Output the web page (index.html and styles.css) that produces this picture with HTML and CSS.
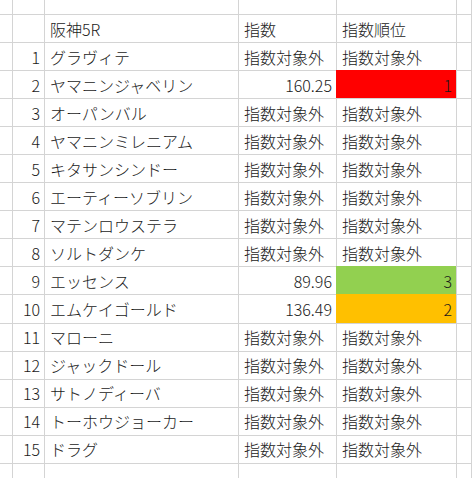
FILE: index.html
```html
<!DOCTYPE html>
<html lang="ja">
<head>
<meta charset="utf-8">
<link rel="stylesheet" href="styles.css">
</head>
<body>
<div class="sheet">
  <div class="c"></div><div class="c"></div><div class="c"></div><div class="c"></div><div class="c"></div><div class="c"></div>

  <div class="c"></div><div class="c num"></div><div class="c">阪神5R</div><div class="c">指数</div><div class="c">指数順位</div><div class="c"></div>

  <div class="c"></div><div class="c num">1</div><div class="c">グラヴィテ</div><div class="c">指数対象外</div><div class="c">指数対象外</div><div class="c"></div>
  <div class="c"></div><div class="c num">2</div><div class="c">ヤマニンジャベリン</div><div class="c num">160.25</div><div class="c num red">1</div><div class="c"></div>
  <div class="c"></div><div class="c num">3</div><div class="c">オーパンバル</div><div class="c">指数対象外</div><div class="c">指数対象外</div><div class="c"></div>
  <div class="c"></div><div class="c num">4</div><div class="c">ヤマニンミレニアム</div><div class="c">指数対象外</div><div class="c">指数対象外</div><div class="c"></div>
  <div class="c"></div><div class="c num">5</div><div class="c">キタサンシンドー</div><div class="c">指数対象外</div><div class="c">指数対象外</div><div class="c"></div>
  <div class="c"></div><div class="c num">6</div><div class="c">エーティーソブリン</div><div class="c">指数対象外</div><div class="c">指数対象外</div><div class="c"></div>
  <div class="c"></div><div class="c num">7</div><div class="c">マテンロウステラ</div><div class="c">指数対象外</div><div class="c">指数対象外</div><div class="c"></div>
  <div class="c"></div><div class="c num">8</div><div class="c">ソルトダンケ</div><div class="c">指数対象外</div><div class="c">指数対象外</div><div class="c"></div>
  <div class="c"></div><div class="c num">9</div><div class="c">エッセンス</div><div class="c num">89.96</div><div class="c num green">3</div><div class="c"></div>
  <div class="c"></div><div class="c num">10</div><div class="c">エムケイゴールド</div><div class="c num">136.49</div><div class="c num orange">2</div><div class="c"></div>
  <div class="c"></div><div class="c num">11</div><div class="c">マローニ</div><div class="c">指数対象外</div><div class="c">指数対象外</div><div class="c"></div>
  <div class="c"></div><div class="c num">12</div><div class="c">ジャックドール</div><div class="c">指数対象外</div><div class="c">指数対象外</div><div class="c"></div>
  <div class="c"></div><div class="c num">13</div><div class="c">サトノディーバ</div><div class="c">指数対象外</div><div class="c">指数対象外</div><div class="c"></div>
  <div class="c"></div><div class="c num">14</div><div class="c">トーホウジョーカー</div><div class="c">指数対象外</div><div class="c">指数対象外</div><div class="c"></div>
  <div class="c"></div><div class="c num">15</div><div class="c">ドラグ</div><div class="c">指数対象外</div><div class="c">指数対象外</div><div class="c"></div>

  <div class="c"></div><div class="c"></div><div class="c"></div><div class="c"></div><div class="c"></div><div class="c"></div>
</div>
</body>
</html>
```

FILE: styles.css
```css
html, body {
  margin: 0;
  padding: 0;
  background: #ffffff;
  overflow: hidden;
}

.sheet {
  display: grid;
  grid-template-columns: 13px 32px 194px 98px 120px 1fr;
  grid-template-rows: 15px repeat(17, 28.06px);
  width: 472px;
  font-family: "Noto Sans CJK JP", "Noto Sans", sans-serif;
  font-size: 16px;
  font-weight: 300;
  color: #1a1a1a;
}

.c {
  box-sizing: border-box;
  border-right: 1px solid #d4d4d4;
  border-bottom: 1px solid #d4d4d4;
  display: flex;
  align-items: center;
  padding: 0 4px 0 5px;
  white-space: nowrap;
  overflow: hidden;
  line-height: 1;
}

.num {
  justify-content: flex-end;
}

.red {
  background: #ff0000;
  box-shadow: -1px -1px 0 0 #ff0000;
}

.green {
  background: #92d050;
  box-shadow: -1px -1px 0 0 #92d050;
}

.orange {
  background: #ffc000;
  box-shadow: -1px -1px 0 0 #ffc000;
}
```
